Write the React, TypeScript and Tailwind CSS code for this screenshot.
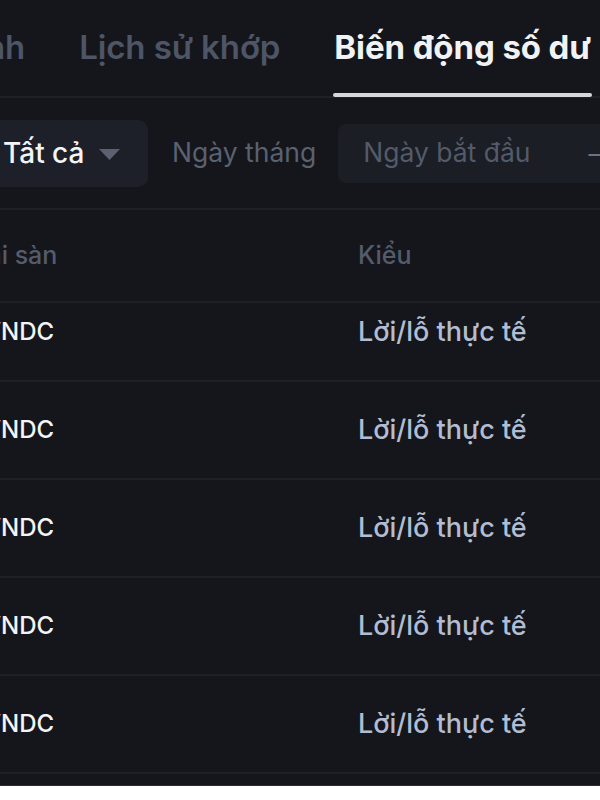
const tabs = [
  { name: "Lịch sử lệnh", current: false },
  { name: "Lịch sử khớp", current: false },
  { name: "Biến động số dư", current: true },
];

const rows = Array.from({ length: 6 }, () => ({
  asset: "VNDC",
  type: "Lời/lỗ thực tế",
}));

function classNames(...classes: any[]) {
  return classes.filter(Boolean).join(" ");
}

export default function App() {
  return (
    <div
      className="h-[800px] w-[600px] overflow-hidden bg-white"
      style={{ fontFamily: "Inter, 'Noto Sans', sans-serif" }}
    >
      <div className="flex h-[786px] flex-col overflow-hidden border-b border-[#2a2d33] bg-[#14161b]">
        {/* tabs */}
        <nav className="flex h-[98px] shrink-0 justify-end gap-[54px] border-b-2 border-[#1b2029] pr-[9px]">
          {tabs.map((tab) => (
            <a
              key={tab.name}
              href="#"
              className={classNames(
                tab.current ? "font-bold text-[#f1f2f4]" : "font-semibold text-[#4d5566]",
                "relative flex h-full shrink-0 items-center whitespace-nowrap text-[33px] tracking-[-0.1px]",
              )}
            >
              {tab.name}
              {tab.current && (
                <span className="absolute bottom-[-1px] left-[-1px] right-[-1px] h-[4px] rounded-full bg-[#d6d7da]" />
              )}
            </a>
          ))}
        </nav>

        {/* filters */}
        <div className="flex h-[112px] shrink-0 items-center border-b-2 border-[#1b2029]">
          <div className="-ml-[40px] flex h-[67px] w-[188px] shrink-0 items-center justify-between rounded-[10px] bg-[#1d2028] pl-[43px] pr-[28px]">
            <span className="text-[28px] font-medium text-[#f3f4f6]">Tất cả</span>
            <svg width="21" height="11" viewBox="0 0 21 11" className="mt-[2px]">
              <path d="M0 0 H21 L10.5 11 Z" fill="#5b6170" />
            </svg>
          </div>
          <span className="ml-[24px] shrink-0 text-[26.5px] text-[#5a6171]">Ngày tháng</span>
          <div className="ml-[22px] flex h-[59px] w-[300px] shrink-0 items-center rounded-[8px] bg-[#1b1e25] pl-[25px]">
            <span className="text-[26.5px] text-[#535b6b]">Ngày bắt đầu</span>
            <span className="ml-[58px] text-[26px] text-[#6b7280]">—</span>
          </div>
        </div>

        {/* table header */}
        <div className="-ml-[27px] grid h-[93px] shrink-0 grid-cols-[385px_1fr] items-center border-b-2 border-[#1b2029]">
          <span className="text-[25px] font-medium text-[#545c6b]">Tài sàn</span>
          <span className="text-[25px] font-medium text-[#545c6b]">Kiểu</span>
        </div>

        {/* rows, scrolled */}
        <div className="min-h-0 flex-1 overflow-hidden">
          <div className="-mt-[19px]">
            {rows.map((row, i) => (
              <div
                key={i}
                className="-ml-[16px] grid h-[98px] grid-cols-[374px_1fr] items-center border-b-2 border-[#1b2029]"
              >
                <span className="text-[24px] font-medium text-[#f4f4f5]">{row.asset}</span>
                <span className="text-[27px] font-medium text-[#b3bdd1]">{row.type}</span>
              </div>
            ))}
          </div>
        </div>
      </div>
    </div>
  );
}
